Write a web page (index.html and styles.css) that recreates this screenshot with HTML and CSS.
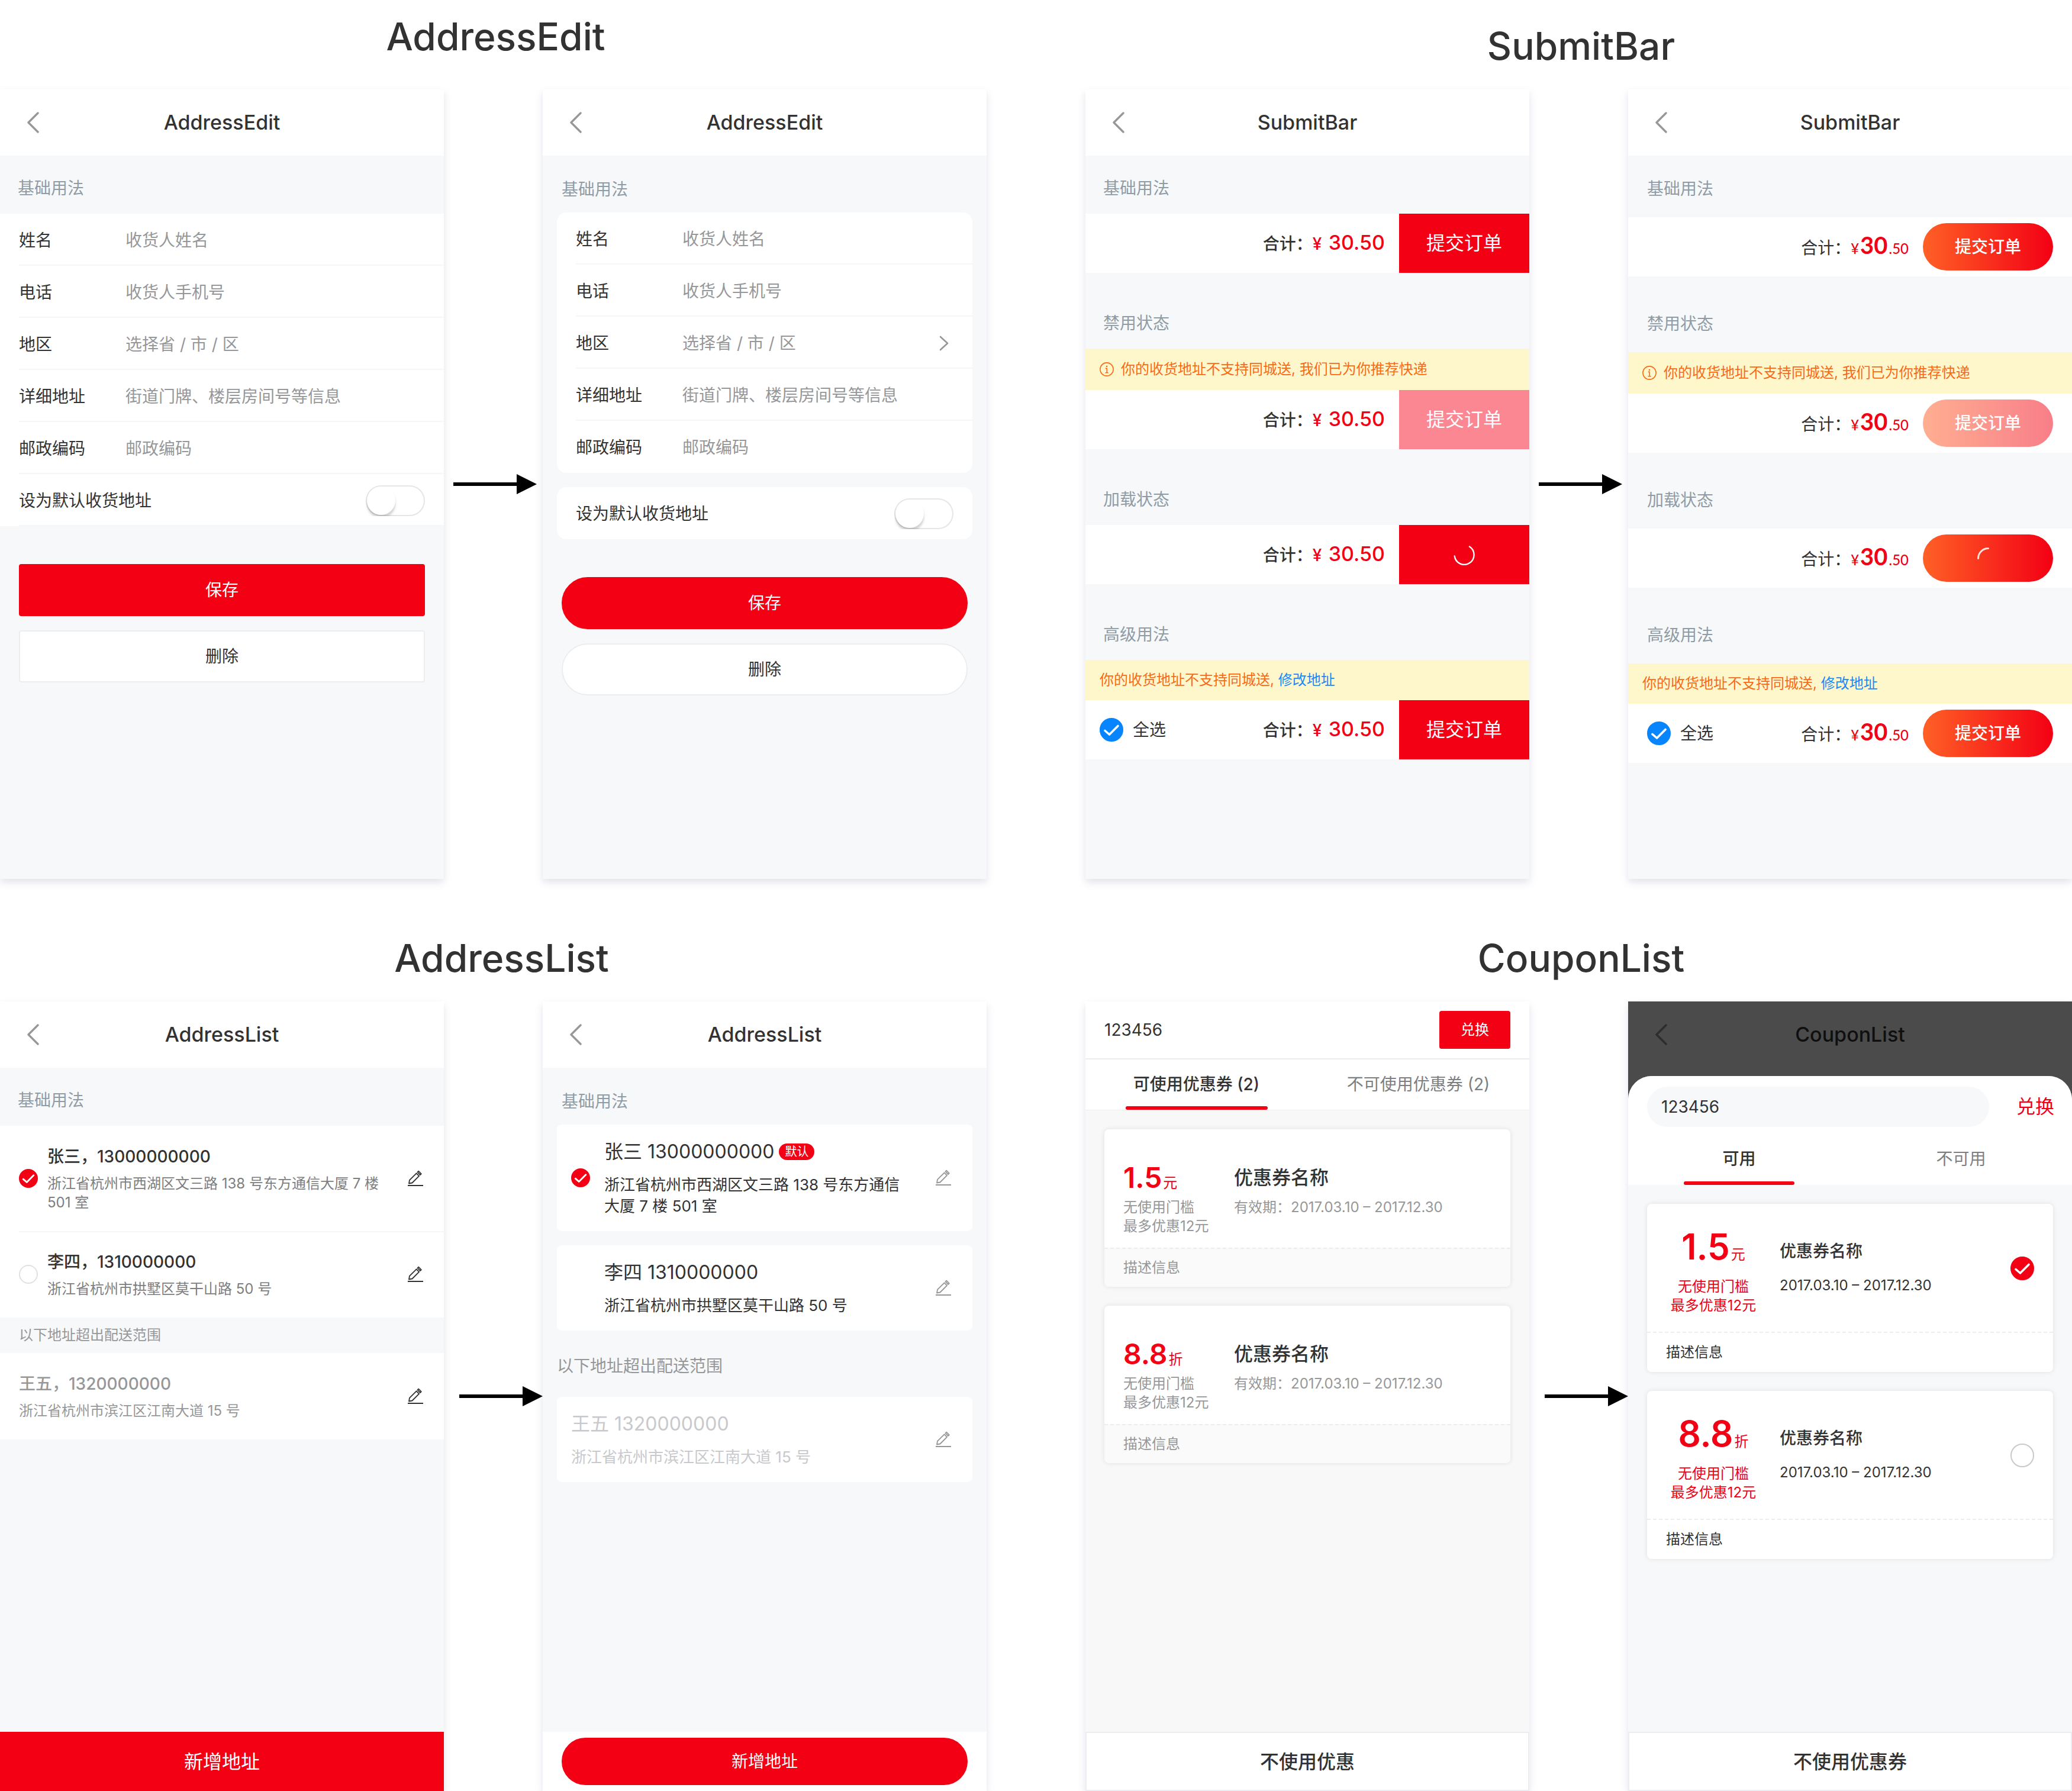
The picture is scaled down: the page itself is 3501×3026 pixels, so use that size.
FILE: index.html
```html
<!DOCTYPE html>
<html lang="zh-CN">
<head>
<meta charset="utf-8">
<meta name="viewport" content="width=device-width, initial-scale=1">
<title>Business components</title>
<link rel="stylesheet" href="styles.css">
</head>
<body>
<svg class="sprite" aria-hidden="true">
  <symbol id="back" viewBox="0 0 20 36"><path d="M18 2 2 18l16 16" fill="none" stroke="currentColor" stroke-width="3.4" stroke-linecap="round" stroke-linejoin="round"/></symbol>
  <symbol id="chevron" viewBox="0 0 16 26"><path d="M2 2l12 11L2 24" fill="none" stroke="currentColor" stroke-width="2.6" stroke-linecap="round" stroke-linejoin="round"/></symbol>
  <symbol id="arrow" viewBox="0 0 141 34"><path d="M0 14h107V0l34 17-34 17V20H0z" fill="currentColor"/></symbol>
  <symbol id="edit" viewBox="0 0 26 28"><g fill="none" stroke="currentColor" stroke-width="1.8" stroke-linejoin="round"><path d="M2 22.5l1-5.6L14.600 5.300l4.500 4.500L7.500 21.500z"/><path d="M16.500 3.400l1.700-1.700 4.600 4.600-1.800 1.700z"/></g><path d="M0 26h26" stroke="currentColor" stroke-width="2"/></symbol>
  <symbol id="info" viewBox="0 0 22 22"><circle cx="11" cy="11" r="10.200" fill="none" stroke="currentColor" stroke-width="1.400"/><circle cx="11" cy="6.400" r="1.200" fill="currentColor"/><path d="M9 9.500h2.200v6.500M8.700 16.200h4.800" fill="none" stroke="currentColor" stroke-width="1.400"/></symbol>
  <symbol id="tick" viewBox="0 0 40 40"><path d="M9 21.500l7.500 6.500L31 13.500" fill="none" stroke="#fff" stroke-width="3.600" stroke-linecap="round" stroke-linejoin="round"/></symbol>
</svg>

<main class="boards">

  <section class="board">
    <h1 class="board-title board-title--raised">AddressEdit</h1>
    <div class="compare">
      <article class="phone">
        <header class="nav"><button class="nav-back" type="button" aria-label="返回"><svg><use href="#back"/></svg></button><h2 class="nav-title">AddressEdit</h2></header>
        <h3 class="section-title">基础用法</h3>
        <form class="form">
          <div class="cells">
            <label class="cell"><span class="cell-label">姓名</span><input class="cell-input" type="text" placeholder="收货人姓名"></label>
            <label class="cell"><span class="cell-label">电话</span><input class="cell-input" type="tel" placeholder="收货人手机号"></label>
            <label class="cell"><span class="cell-label">地区</span><input class="cell-input" type="text" placeholder="选择省 / 市 / 区" readonly></label>
            <label class="cell"><span class="cell-label">详细地址</span><input class="cell-input" type="text" placeholder="街道门牌、楼层房间号等信息"></label>
            <label class="cell"><span class="cell-label">邮政编码</span><input class="cell-input" type="text" placeholder="邮政编码"></label>
            <label class="cell cell--switch"><span>设为默认收货地址</span><input class="switch" type="checkbox" role="switch"></label>
          </div>
          <div class="actions">
            <button class="btn btn--primary" type="button">保存</button>
            <button class="btn" type="button">删除</button>
          </div>
        </form>
      </article>
      <svg class="arrow" aria-hidden="true"><use href="#arrow"/></svg>
      <article class="phone phone--new">
        <header class="nav"><button class="nav-back" type="button" aria-label="返回"><svg><use href="#back"/></svg></button><h2 class="nav-title">AddressEdit</h2></header>
        <h3 class="section-title">基础用法</h3>
        <form class="form form--cards">
          <div class="cells">
            <label class="cell"><span class="cell-label">姓名</span><input class="cell-input" type="text" placeholder="收货人姓名"></label>
            <label class="cell"><span class="cell-label">电话</span><input class="cell-input" type="tel" placeholder="收货人手机号"></label>
            <label class="cell"><span class="cell-label">地区</span><input class="cell-input" type="text" placeholder="选择省 / 市 / 区" readonly><svg class="chevron" aria-hidden="true"><use href="#chevron"/></svg></label>
            <label class="cell"><span class="cell-label">详细地址</span><input class="cell-input" type="text" placeholder="街道门牌、楼层房间号等信息"></label>
            <label class="cell"><span class="cell-label">邮政编码</span><input class="cell-input" type="text" placeholder="邮政编码"></label>
          </div>
          <div class="cells">
            <label class="cell cell--switch"><span>设为默认收货地址</span><input class="switch" type="checkbox" role="switch"></label>
          </div>
          <div class="actions">
            <button class="btn btn--primary btn--round" type="button">保存</button>
            <button class="btn btn--round" type="button">删除</button>
          </div>
        </form>
      </article>
    </div>
  </section>

  <section class="board">
    <h1 class="board-title">SubmitBar</h1>
    <div class="compare">
      <article class="phone phone--bars">
        <header class="nav"><button class="nav-back" type="button" aria-label="返回"><svg><use href="#back"/></svg></button><h2 class="nav-title">SubmitBar</h2></header>
        <h3 class="section-title">基础用法</h3>
        <div class="bar"><p class="total">合计：<span class="price">¥ <b>30.50</b></span></p><button class="submit" type="button">提交订单</button></div>
        <h3 class="section-title">禁用状态</h3>
        <p class="tip tip--icon"><svg class="tip-icon" aria-hidden="true"><use href="#info"/></svg>你的收货地址不支持同城送, 我们已为你推荐快递</p>
        <div class="bar"><p class="total">合计：<span class="price">¥ <b>30.50</b></span></p><button class="submit" type="button" disabled>提交订单</button></div>
        <h3 class="section-title">加载状态</h3>
        <div class="bar"><p class="total">合计：<span class="price">¥ <b>30.50</b></span></p><button class="submit" type="button" aria-label="加载中"><svg class="spinner" viewBox="0 0 36 36"><path d="M27 4.500A16.500 16.500 0 1 1 1.700 20.500" fill="none" stroke="#fff" stroke-width="2.400" stroke-linecap="round"/></svg></button></div>
        <h3 class="section-title">高级用法</h3>
        <p class="tip">你的收货地址不支持同城送, <a href="#edit-address">修改地址</a></p>
        <div class="bar"><label class="all"><span class="check check--blue"><input type="checkbox" checked><svg aria-hidden="true"><use href="#tick"/></svg></span>全选</label><p class="total">合计：<span class="price">¥ <b>30.50</b></span></p><button class="submit" type="button">提交订单</button></div>
      </article>
      <svg class="arrow" aria-hidden="true"><use href="#arrow"/></svg>
      <article class="phone phone--bars phone--pills">
        <header class="nav"><button class="nav-back" type="button" aria-label="返回"><svg><use href="#back"/></svg></button><h2 class="nav-title">SubmitBar</h2></header>
        <h3 class="section-title">基础用法</h3>
        <div class="bar"><p class="total">合计：<span class="price">¥<b>30</b>.50</span></p><button class="submit" type="button">提交订单</button></div>
        <h3 class="section-title">禁用状态</h3>
        <p class="tip tip--icon"><svg class="tip-icon" aria-hidden="true"><use href="#info"/></svg>你的收货地址不支持同城送, 我们已为你推荐快递</p>
        <div class="bar"><p class="total">合计：<span class="price">¥<b>30</b>.50</span></p><button class="submit" type="button" disabled>提交订单</button></div>
        <h3 class="section-title">加载状态</h3>
        <div class="bar"><p class="total">合计：<span class="price">¥<b>30</b>.50</span></p><button class="submit" type="button" aria-label="加载中"><svg class="spinner" viewBox="0 0 36 36"><path d="M1.500 18.500A17 17 0 0 1 18.500 1.500" fill="none" stroke="#fff" stroke-opacity=".85" stroke-width="3" stroke-linecap="round"/></svg></button></div>
        <h3 class="section-title">高级用法</h3>
        <p class="tip">你的收货地址不支持同城送, <a href="#edit-address">修改地址</a></p>
        <div class="bar"><label class="all"><span class="check check--blue"><input type="checkbox" checked><svg aria-hidden="true"><use href="#tick"/></svg></span>全选</label><p class="total">合计：<span class="price">¥<b>30</b>.50</span></p><button class="submit" type="button">提交订单</button></div>
      </article>
    </div>
  </section>

  <section class="board">
    <h1 class="board-title board-title--list">AddressList</h1>
    <div class="compare compare--end">
      <article class="phone">
        <header class="nav"><button class="nav-back" type="button" aria-label="返回"><svg><use href="#back"/></svg></button><h2 class="nav-title">AddressList</h2></header>
        <h3 class="section-title">基础用法</h3>
        <ul class="addresses">
          <li class="address">
            <span class="check"><input type="radio" name="address-old" id="old-1" checked><svg aria-hidden="true"><use href="#tick"/></svg></span>
            <label class="address-body" for="old-1"><strong class="address-name">张三，13000000000</strong><span class="address-text">浙江省杭州市西湖区文三路 138 号东方通信大厦 7 楼 501 室</span></label>
            <button class="edit" type="button" aria-label="编辑"><svg><use href="#edit"/></svg></button>
          </li>
          <li class="address">
            <span class="check"><input type="radio" name="address-old" id="old-2"></span>
            <label class="address-body" for="old-2"><strong class="address-name">李四，1310000000</strong><span class="address-text">浙江省杭州市拱墅区莫干山路 50 号</span></label>
            <button class="edit" type="button" aria-label="编辑"><svg><use href="#edit"/></svg></button>
          </li>
        </ul>
        <p class="out-of-range">以下地址超出配送范围</p>
        <ul class="addresses addresses--disabled">
          <li class="address">
            <div class="address-body"><strong class="address-name">王五，1320000000</strong><span class="address-text">浙江省杭州市滨江区江南大道 15 号</span></div>
            <button class="edit" type="button" aria-label="编辑"><svg><use href="#edit"/></svg></button>
          </li>
        </ul>
        <footer class="footer"><button class="footer-btn footer-btn--primary" type="button">新增地址</button></footer>
      </article>
      <svg class="arrow" aria-hidden="true"><use href="#arrow"/></svg>
      <article class="phone phone--new phone--address-cards">
        <header class="nav"><button class="nav-back" type="button" aria-label="返回"><svg><use href="#back"/></svg></button><h2 class="nav-title">AddressList</h2></header>
        <h3 class="section-title">基础用法</h3>
        <ul class="addresses">
          <li class="address">
            <span class="check"><input type="radio" name="address-new" id="new-1" checked><svg aria-hidden="true"><use href="#tick"/></svg></span>
            <label class="address-body" for="new-1"><strong class="address-name">张三 13000000000<em class="badge">默认</em></strong><span class="address-text">浙江省杭州市西湖区文三路 138 号东方通信大厦 7 楼 501 室</span></label>
            <button class="edit" type="button" aria-label="编辑"><svg><use href="#edit"/></svg></button>
          </li>
          <li class="address">
            <span class="check check--hidden"><input type="radio" name="address-new" id="new-2"></span>
            <label class="address-body" for="new-2"><strong class="address-name">李四 1310000000</strong><span class="address-text">浙江省杭州市拱墅区莫干山路 50 号</span></label>
            <button class="edit" type="button" aria-label="编辑"><svg><use href="#edit"/></svg></button>
          </li>
        </ul>
        <p class="out-of-range">以下地址超出配送范围</p>
        <ul class="addresses addresses--disabled">
          <li class="address">
            <div class="address-body"><strong class="address-name">王五 1320000000</strong><span class="address-text">浙江省杭州市滨江区江南大道 15 号</span></div>
            <button class="edit" type="button" aria-label="编辑"><svg><use href="#edit"/></svg></button>
          </li>
        </ul>
        <footer class="footer footer--inset"><button class="btn btn--primary btn--round btn--footer" type="button">新增地址</button></footer>
      </article>
    </div>
  </section>

  <section class="board">
    <h1 class="board-title">CouponList</h1>
    <div class="compare compare--end">
      <article class="phone phone--coupons">
        <form class="exchange"><input class="exchange-input" type="text" value="123456" aria-label="优惠码"><button class="exchange-btn" type="button">兑换</button></form>
        <div class="tabs" role="tablist"><button class="tab tab--active" type="button" role="tab" aria-selected="true">可使用优惠券 (2)</button><button class="tab" type="button" role="tab" aria-selected="false">不可使用优惠券 (2)</button></div>
        <div class="coupons">
          <section class="coupon">
            <div class="coupon-head">
              <div class="coupon-value"><p class="amount"><b>1.5</b>元</p><p class="terms">无使用门槛<br>最多优惠12元</p></div>
              <div class="coupon-info"><h3 class="coupon-name">优惠券名称</h3><p class="coupon-date">有效期：2017.03.10 – 2017.12.30</p></div>
            </div>
            <p class="coupon-desc">描述信息</p>
          </section>
          <section class="coupon">
            <div class="coupon-head">
              <div class="coupon-value"><p class="amount"><b>8.8</b>折</p><p class="terms">无使用门槛<br>最多优惠12元</p></div>
              <div class="coupon-info"><h3 class="coupon-name">优惠券名称</h3><p class="coupon-date">有效期：2017.03.10 – 2017.12.30</p></div>
            </div>
            <p class="coupon-desc">描述信息</p>
          </section>
        </div>
        <footer class="footer"><button class="footer-btn" type="button">不使用优惠</button></footer>
      </article>
      <svg class="arrow" aria-hidden="true"><use href="#arrow"/></svg>
      <article class="phone phone--sheet">
        <header class="nav"><button class="nav-back" type="button" aria-label="返回"><svg><use href="#back"/></svg></button><h2 class="nav-title">CouponList</h2></header>
        <div class="sheet">
          <form class="exchange"><input class="exchange-input" type="text" value="123456" aria-label="优惠码"><button class="exchange-btn" type="button">兑换</button></form>
          <div class="tabs" role="tablist"><button class="tab tab--active" type="button" role="tab" aria-selected="true">可用</button><button class="tab" type="button" role="tab" aria-selected="false">不可用</button></div>
          <div class="coupons">
            <section class="coupon">
              <div class="coupon-head">
                <div class="coupon-value"><p class="amount"><b>1.5</b>元</p><p class="terms">无使用门槛<br>最多优惠12元</p></div>
                <div class="coupon-info"><h3 class="coupon-name">优惠券名称</h3><p class="coupon-date">2017.03.10 – 2017.12.30</p></div>
                <span class="check check--large"><input type="radio" name="coupon" aria-label="选择 1.5 元优惠券" checked><svg aria-hidden="true"><use href="#tick"/></svg></span>
              </div>
              <p class="coupon-desc">描述信息</p>
            </section>
            <section class="coupon">
              <div class="coupon-head">
                <div class="coupon-value"><p class="amount"><b>8.8</b>折</p><p class="terms">无使用门槛<br>最多优惠12元</p></div>
                <div class="coupon-info"><h3 class="coupon-name">优惠券名称</h3><p class="coupon-date">2017.03.10 – 2017.12.30</p></div>
                <span class="check check--large"><input type="radio" name="coupon" aria-label="选择 8.8 折优惠券"></span>
              </div>
              <p class="coupon-desc">描述信息</p>
            </section>
          </div>
          <footer class="footer"><button class="footer-btn" type="button">不使用优惠券</button></footer>
        </div>
      </article>
    </div>
  </section>

</main>
</body>
</html>
```

FILE: styles.css
```css
:root {
  --red: #f30014;
  --blue: #0785ff;
  --text: #323233;
  --muted: #969799;
  --page: #f7f8fa;
  --line: #ebedf0;
}

* { box-sizing: border-box; }

body {
  margin: 0;
  background: #fff;
  color: var(--text);
  font: 400 28px/40px Inter, "Noto Sans CJK SC", sans-serif;
}

h1, h2, h3, p, ul { margin: 0; padding: 0; font-weight: 400; }
ul { list-style: none; }
button, input { margin: 0; padding: 0; border: 0; background: none; color: inherit; font: inherit; }
svg { display: block; }
.sprite { display: none; }

/* Boards */
.boards {
  display: grid;
  grid-template-columns: 1fr 1fr;
  column-gap: 167px;
  row-gap: 56px;
}
.board-title {
  display: flex;
  align-items: flex-end;
  justify-content: center;
  min-height: 151px;
  padding: 0 0 33px 8px;
  font-size: 64px;
  font-weight: 500;
  line-height: 80px;
}
.board-title--raised { padding-bottom: 49px; }
.board-title--list { padding-left: 28px; }
.compare {
  display: grid;
  grid-template-columns: 1fr 167px 1fr;
  align-items: center;
}
.arrow { width: 141px; height: 34px; margin-left: 6px; justify-self: center; color: #000; }
.compare--end .arrow { justify-self: end; }

/* Phone frame */
.phone {
  display: flex;
  flex-direction: column;
  min-width: 0;
  min-height: 1334px;
  background: var(--page);
  box-shadow: 0 6px 12px rgba(100, 105, 150, .18);
}
.nav {
  display: grid;
  grid-template-columns: 1fr auto 1fr;
  align-items: center;
  height: 112px;
  padding: 0 46px;
  background: #fff;
}
.nav-back { justify-self: start; color: var(--muted); }
.nav-back svg { width: 20px; height: 36px; }
.nav-title { font-size: 34px; font-weight: 500; line-height: 48px; }
.section-title {
  padding: 36px 30px 24px;
  color: #8f9ca5;
  font-size: 28px;
  line-height: 38px;
}
.phone--new .section-title { padding: 38px 32px 20px; }

/* Address form */
.cells { background: #fff; }
.cell {
  display: flex;
  align-items: center;
  height: 88px;
  margin-left: 32px;
  padding: 4px 32px 0 0;
  border-bottom: 2px solid #f5f6f7;
}
.cell-label { flex: 0 0 180px; }
.cell-input { flex: 1; min-width: 0; height: 40px; }
.cell-input::placeholder { color: var(--muted); opacity: 1; }
.cell--switch { justify-content: space-between; }
.chevron { width: 16px; height: 26px; margin-right: 8px; color: var(--muted); }
.switch {
  appearance: none;
  width: 100px;
  height: 52px;
  border: 2px solid rgba(0, 0, 0, .1);
  border-radius: 26px;
  background: #fff;
  clip-path: inset(0);
}
.switch::before {
  content: "";
  display: block;
  width: 48px;
  height: 48px;
  border-radius: 50%;
  background: #fff;
  box-shadow: 0 6px 2px rgba(0, 0, 0, .05), 0 4px 4px rgba(0, 0, 0, .1), 0 6px 6px rgba(0, 0, 0, .05);
}
.form--cards { padding: 0 24px; }
.form--cards .cells { border-radius: 16px; }
.form--cards .cells + .cells { margin-top: 24px; }
.form--cards .cell:last-child { padding-top: 2px; border-bottom: 0; }
.actions { display: grid; gap: 24px; padding: 64px 32px 0; }
.form--cards .actions { padding: 64px 8px 0; }
.btn {
  height: 88px;
  border: 2px solid var(--line);
  border-radius: 4px;
  background: #fff;
  font-size: 28px;
}
.btn--primary { border-color: var(--red); background: var(--red); color: #fff; }
.btn--round { border-radius: 44px; }
.btn--footer { width: 100%; height: 80px; }

/* Submit bar */
.phone--bars .bar + .section-title { margin-top: 30px; }
.phone--pills .section-title { padding: 37px 32px 29px; }
.phone--pills .bar + .section-title { margin-top: 24px; }
.bar { display: flex; align-items: center; height: 100px; background: #fff; }
.total { margin-left: auto; padding-right: 24px; font-weight: 500; white-space: nowrap; }
.price { color: var(--red); }
.price b { margin-left: 4px; font-size: 34px; font-weight: 500; }
.submit {
  display: grid;
  place-items: center;
  width: 220px;
  height: 100%;
  background: var(--red);
  color: #fff;
  font-size: 32px;
}
.submit:disabled { background: #fb8793; }
.spinner { width: 36px; height: 36px; }
.phone--pills .bar { padding-right: 32px; }
.phone--pills .total { font-weight: 400; }
.phone--pills .price { font-family: Lato, sans-serif; font-size: 24px; font-weight: 500; }
.phone--pills .price b { margin: 0 2px; font-size: 40px; font-weight: 700; }
.phone--pills .submit {
  height: 80px;
  border-radius: 40px;
  background: linear-gradient(90deg, #ff6026, var(--red));
  font-size: 28px;
  font-weight: 500;
}
.phone--pills .submit:disabled { opacity: .5; }
.tip {
  padding: 16px 24px;
  background: #fff7cc;
  color: #f96a17;
  font-size: 24px;
  line-height: 36px;
}
.tip--icon { display: flex; align-items: center; gap: 12px; padding: 17px 24px; }
.tip-icon { width: 24px; height: 24px; }
.tip a { color: #1989fa; text-decoration: none; }
.all { display: flex; align-items: center; gap: 16px; padding-left: 24px; }
.phone--pills .all { padding-left: 32px; }

/* Round check marks */
.check { display: grid; flex: none; width: 32px; height: 32px; }
.check > * { grid-area: 1 / 1; width: 100%; height: 100%; pointer-events: none; }
.check input {
  appearance: none;
  border: 2px solid #e0e1e3;
  border-radius: 50%;
  background: #fff;
  pointer-events: auto;
}
.check input:checked { border-color: var(--red); background: var(--red); }
.check--blue, .check--large { width: 40px; height: 40px; }
.check--blue input:checked { border-color: var(--blue); background: var(--blue); }
.check--large input { border-color: #c8c9cc; }
.check--hidden input { border-color: transparent; }

/* Address list */
.address {
  display: flex;
  align-items: center;
  gap: 16px;
  padding: 32px 35px 32px 32px;
  background: #fff;
}
.address + .address {
  background: linear-gradient(#f5f6f7, #f5f6f7) 32px 0 / 100% 2px no-repeat #fff;
}
.address-body { flex: 1; min-width: 0; padding-right: 24px; }
.address-name { display: block; font-size: 28px; font-weight: 500; line-height: 40px; }
.address-text {
  display: block;
  margin-top: 10px;
  color: #7d7e80;
  font-size: 24px;
  line-height: 32px;
}
.edit { flex: none; }
.edit svg { width: 26px; height: 28px; }
.out-of-range {
  padding: 12px 32px;
  color: var(--muted);
  font-size: 24px;
  line-height: 36px;
}
.addresses--disabled .address-name,
.addresses--disabled .address-text { color: var(--muted); }

.phone--address-cards .addresses { display: grid; gap: 24px; padding: 0 24px; }
.phone--address-cards .address {
  gap: 24px;
  padding: 24px 36px 24px 24px;
  border-radius: 8px;
  background: #fff;
}
.phone--address-cards .address-name {
  display: flex;
  align-items: center;
  gap: 8px;
  font-size: 32px;
  font-weight: 400;
  line-height: 44px;
}
.phone--address-cards .address-body { padding-right: 36px; }
.phone--address-cards .address-text {
  margin-top: 16px;
  color: var(--text);
  font-size: 26px;
  line-height: 36px;
}
.phone--address-cards .edit { color: var(--muted); }
.phone--address-cards .out-of-range { padding: 40px 24px 32px; font-size: 28px; line-height: 40px; }
.phone--address-cards .addresses--disabled .address-name,
.phone--address-cards .addresses--disabled .address-text { color: #c8c9cc; }
.badge {
  padding: 0 10px;
  border-radius: 14px;
  background: var(--red);
  color: #fff;
  font-size: 20px;
  font-style: normal;
  line-height: 28px;
}

/* Footers */
.footer { margin-top: auto; }
.footer-btn {
  display: block;
  width: 100%;
  height: 100px;
  padding-top: 2px;
  border: 2px solid var(--line);
  background: #fff;
  font-size: 32px;
  font-weight: 500;
}
.footer-btn--primary { border-color: var(--red); background: var(--red); color: #fff; font-weight: 400; }
.footer--inset { padding: 10px 32px; background: #fff; }

/* Coupons */
.phone--coupons { background: #f8f8f8; }
.exchange {
  display: flex;
  align-items: center;
  height: 96px;
  padding: 0 32px;
  background: #fff;
}
.exchange-input { flex: 1; min-width: 0; height: 68px; }
.exchange-btn {
  width: 120px;
  height: 64px;
  border-radius: 4px;
  background: var(--red);
  color: #fff;
  font-size: 24px;
}
.tabs {
  display: grid;
  grid-template-columns: 1fr 1fr;
  height: 88px;
  border-top: 2px solid var(--line);
  border-bottom: 1px solid var(--line);
  background: #fff;
}
.tab {
  display: grid;
  grid-template-rows: 1fr 6px;
  place-items: center;
  padding-top: 4px;
  color: #7d7e80;
}
.tab--active { color: var(--text); font-weight: 500; }
.tab--active::after {
  content: "";
  width: 64%;
  height: 6px;
  border-radius: 3px;
  background: var(--red);
}
.coupons { display: grid; gap: 32px; padding: 32px; }
.coupon {
  overflow: hidden;
  border-radius: 8px;
  background: #fff;
  box-shadow: 0 0 8px rgba(0, 0, 0, .1);
}
.coupon-head {
  display: grid;
  grid-template-columns: 187px 1fr;
  padding: 48px 32px 20px;
}
.amount {
  display: flex;
  align-items: baseline;
  gap: 2px;
  color: var(--red);
  font-size: 24px;
  line-height: 32px;
}
.amount b { font-size: 48px; font-weight: 600; line-height: 68px; }
.terms { color: var(--muted); font-size: 24px; line-height: 32px; white-space: nowrap; }
.coupon-name { font-size: 32px; font-weight: 500; line-height: 68px; }
.coupon-date { color: var(--muted); font-size: 24px; line-height: 32px; }
.coupon-desc {
  padding: 16px 32px;
  border-top: 2px dashed var(--line);
  background: #fafafa;
  color: var(--muted);
  font-size: 24px;
  line-height: 32px;
}

/* Coupon sheet over a dimmed page */
.phone--sheet { background: #4b4b4b; }
.phone--sheet .nav { background: #4b4b4b; }
.phone--sheet .nav-back { color: #2d2d2e; }
.phone--sheet .nav-title { color: #0f0f0f; }
.sheet {
  display: flex;
  flex: 1;
  flex-direction: column;
  margin-top: 14px;
  overflow: hidden;
  border-radius: 40px 40px 0 0;
  background: var(--page);
}
.sheet .exchange { justify-content: space-between; padding: 8px 30px 0 32px; }
.sheet .exchange-input {
  flex: 0 0 578px;
  padding: 0 24px;
  border-radius: 34px;
  background: var(--page);
}
.sheet .exchange-btn { width: auto; background: none; color: var(--red); font-size: 32px; }
.sheet .tabs { border: 0; }
.sheet .tab { padding-top: 6px; }
.sheet .tab--active::after { width: 50%; }
.sheet .coupon-head {
  grid-template-columns: 224px 1fr 40px;
  align-items: center;
  padding: 30px 32px 28px 0;
}
.sheet .amount { justify-content: center; margin-bottom: 10px; }
.sheet .amount b { font-size: 60px; line-height: 84px; }
.sheet .terms { color: var(--red); text-align: center; }
.sheet .coupon-info { align-self: start; padding-top: 30px; }
.sheet .coupon-name { font-size: 28px; line-height: 40px; }
.sheet .coupon-date { margin-top: 22px; color: var(--text); }
.sheet .coupon-desc { padding: 17px 32px; background: #fff; color: var(--text); }
```
